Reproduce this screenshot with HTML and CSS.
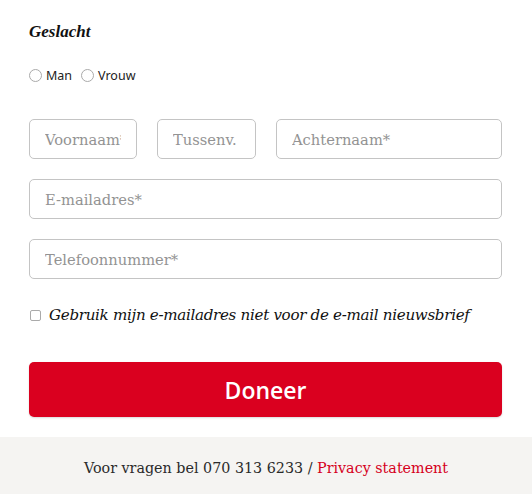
FILE: index.html
```html
<!DOCTYPE html>
<html lang="nl">
<head>
  <meta charset="UTF-8" />
  <meta name="viewport" content="width=device-width, initial-scale=1.0"/>
  <title>Doneer</title>
  <link rel="stylesheet" href="styles.css">
</head>
<body>

  <div class="container">
    <form id="donateForm">
      <h3 class="label-title">Geslacht</h3>

      <div class="radio-row">
        <label class="radio"><input type="radio" name="gender" value="m"> Man</label>
        <label class="radio"><input type="radio" name="gender" value="v"> Vrouw</label>
      </div>

      <div class="name-row">
        <input type="text" class="field first" placeholder="Voornaam*">
        <input type="text" class="field middle" placeholder="Tussenv.">
        <input type="text" class="field last" placeholder="Achternaam*">
      </div>

      <input type="email" class="field" placeholder="E-mailadres*">
      <input type="tel" class="field" placeholder="Telefoonnummer*">

      <label class="check">
        <input type="checkbox"> Gebruik mijn e-mailadres niet voor de e-mail nieuwsbrief
      </label>

      <button type="submit" class="btn-donate">Doneer</button>
    </form>
  </div>

  <div class="footer">
    Voor vragen bel 070 313 6233 / <a href="#">Privacy statement</a>
  </div>

</body>
</html>
```

FILE: styles.css
```css
body {
  margin: 0;
  font-family: 'DejaVu Serif', serif;
  background: white;
  color: #222;
}

.container {
  padding: 20px 30px 20px 29px;
}

.label-title {
  font-family: 'Liberation Serif', serif;
  font-style: italic;
  font-weight: bold;
  font-size: 17px;
  margin: 2px 0 0;
  color: #111;
}

.radio-row {
  display: flex;
  gap: 9px;
  margin-top: 25px;
  font-family: 'Noto Sans', sans-serif;
  font-size: 12.5px;
}

.radio {
  display: flex;
  align-items: center;
  gap: 4px;
}

.radio input {
  appearance: none;
  width: 13px;
  height: 13px;
  margin: 0;
  border: 1px solid #aaa;
  border-radius: 50%;
  background: white;
}

.name-row {
  display: flex;
  gap: 20px;
  margin-top: 35px;
}

.field {
  display: block;
  box-sizing: border-box;
  width: 100%;
  height: 40px;
  padding: 0 15px;
  margin-bottom: 20px;
  border: 1px solid #c4c4c4;
  border-radius: 5px;
  font-family: 'DejaVu Serif', serif;
  font-size: 14.7px;
  font-weight: 300;
  color: #333;
}

.field::placeholder {
  color: #939393;
}

.field.first {
  width: 108px;
  flex: none;
}

.field.middle {
  width: 99px;
  flex: none;
}

.field.last {
  flex: 1;
}

.check {
  display: flex;
  align-items: center;
  gap: 8px;
  margin-top: 27px;
  font-style: italic;
  font-size: 15.1px;
  color: #111;
  letter-spacing: -0.3px;
}

.check input {
  appearance: none;
  width: 11px;
  height: 11px;
  margin: 0 0 0 1px;
  border: 1px solid #aaa;
  border-radius: 2px;
}

.btn-donate {
  display: block;
  width: 100%;
  height: 55px;
  margin-top: 38px;
  background-color: #da001f;
  color: white;
  border: none;
  border-radius: 5px;
  font-family: 'Open Sans', sans-serif;
  font-weight: 600;
  font-size: 23px;
  cursor: pointer;
  box-shadow: 0 1px 2px rgba(0,0,0,0.15);
}

.footer {
  background: #f5f4f2;
  text-align: center;
  padding: 23px 0 21px;
  font-size: 14.3px;
  color: #2a2a2a;
}

.footer a {
  color: #d6001c;
  text-decoration: none;
}
```
